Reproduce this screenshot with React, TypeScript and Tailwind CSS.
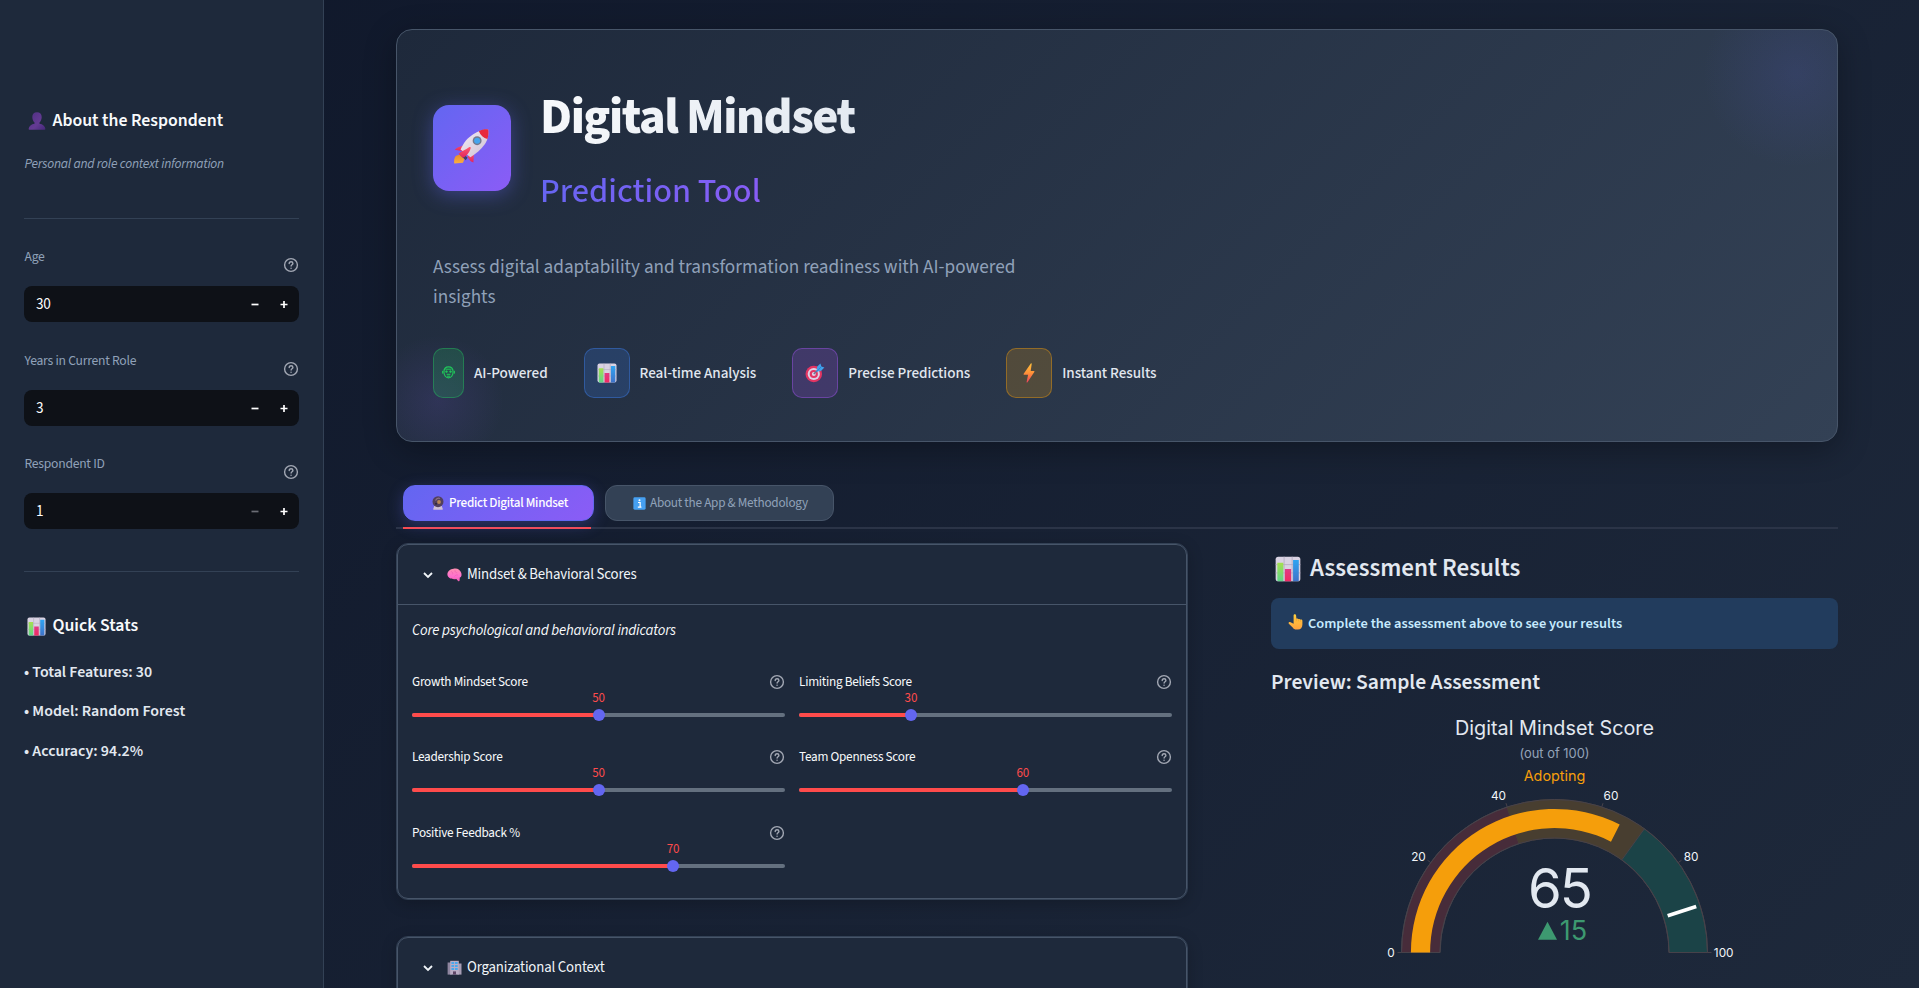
import React from "react";

type IconProps = { className?: string };

function ChartIcon({ className }: IconProps) {
  return (
    <svg viewBox="0 0 20 20" className={className}>
      <rect x="0.5" y="0.5" width="19" height="19" rx="2" fill="#d9d2e2" />
      <path d="M7 .5v19M13.2.5v19M.5 6.6h19M.5 13h19" stroke="#b3a9c0" strokeWidth=".6" />
      <path d="M1.8 5.2h4.600v14.300H2.400a1 1 0 0 1-.6-.6z" fill="url(#chGreen)" />
      <path d="M7.600 10h4.800v9.500H7.600z" fill="url(#chPink)" />
      <path d="M13.900 3h4.400v15.900a.8.8 0 0 1-.6.6h-3.800z" fill="url(#chBlue)" />
      <defs>
        <linearGradient id="chGreen" x1="0" y1="0" x2="0" y2="1"><stop stopColor="#a4e04e" /><stop offset="1" stopColor="#5fd48a" /></linearGradient>
        <linearGradient id="chPink" x1="0" y1="0" x2="0" y2="1"><stop stopColor="#e03a86" /><stop offset="1" stopColor="#f02a62" /></linearGradient>
        <linearGradient id="chBlue" x1="0" y1="0" x2="0" y2="1"><stop stopColor="#2fa4f2" /><stop offset="1" stopColor="#3f72c8" /></linearGradient>
      </defs>
    </svg>
  );
}

function UserIcon({ className }: IconProps) {
  return (
    <svg viewBox="0 0 18 18" className={className}>
      <defs><linearGradient id="usr" x1="0" y1="0" x2="1" y2="1"><stop stopColor="#4f2f83" /><stop offset=".6" stopColor="#643b93" /><stop offset="1" stopColor="#45287a" /></linearGradient></defs>
      <path d="M9 .3c3 0 4.700 1.900 4.700 4.700 0 2.200-.8 4.300-2.200 5.400v1.300c3.200.5 5.600 2.200 5.900 5.200 0 .5-.3.800-.8.800H1.400c-.5 0-.8-.3-.8-.8.3-3 2.700-4.700 5.900-5.200v-1.300C5.100 9.300 4.300 7.200 4.300 5 4.300 2.200 6 .3 9 .3z" fill="url(#usr)" />
    </svg>
  );
}

function RocketIcon({ className }: IconProps) {
  return (
    <svg viewBox="0 0 38 38" className={className}>
      <defs>
        <linearGradient id="rkBody" x1="0" y1="0" x2="1" y2="1"><stop stopColor="#f4edf5" /><stop offset="1" stopColor="#cdbfd2" /></linearGradient>
        <linearGradient id="rkFin" x1="0" y1="0" x2="0" y2="1"><stop stopColor="#ff5a6c" /><stop offset="1" stopColor="#e0245e" /></linearGradient>
        <linearGradient id="rkFire" x1="0" y1="0" x2="0" y2="1"><stop stopColor="#e88a2a" /><stop offset="1" stopColor="#fbb040" /></linearGradient>
      </defs>
      <path d="M9 19l6-2.500-3.500 7.500-8.700-1.600C4.200 20.600 6 19.600 9 19z" fill="url(#rkFin)" />
      <path d="M15.800 29l6.800-4.800-.6 11.300c-2.700-.7-4.800-3-6.200-6.500z" fill="url(#rkFin)" />
      <path d="M3.800 28.800l4-1.600 5 4.600-1.500 4-9 .7c-.5-3 .2-6 1.500-7.700z" fill="url(#rkFire)" />
      <path d="M7.500 26.700l6.500 6.400 2-2.600-6.400-6z" fill="#3b3f6b" />
      <path d="M37.200 1.500c.4 4.700.3 9.700-3.900 15.800-3.300 4.700-8 9-14.400 12.700L8.800 22C12 14.800 16 10 21.800 6.300 27 3 31.800 1.300 37.200 1.500z" fill="url(#rkBody)" />
      <path d="M27.600 3.300C31 1.400 34.600.9 37.200 1.500c.5 2.900.4 6.200-.8 9.700-4-1-7.300-3.700-8.800-7.900z" fill="#e8283c" />
      <circle cx="25.800" cy="13" r="4.600" fill="#74798c" />
      <circle cx="25.800" cy="13" r="3.100" fill="#45a5ee" />
      <path d="M17.500 19.800c1-.9 2.200-.2 1.600 1.300-1.300 4-4 8.200-8 9.500l-4.400-4.200c2.700-2.400 7.500-3.800 10.800-6.600z" fill="url(#rkFin)" />
    </svg>
  );
}

function TargetIcon({ className }: IconProps) {
  return (
    <svg viewBox="0 0 20 20" className={className}>
      <circle cx="8.800" cy="11" r="8.300" fill="#e23563" />
      <circle cx="8.800" cy="11" r="6.100" fill="#ddd0e6" />
      <circle cx="8.800" cy="11" r="4.100" fill="#e23563" />
      <circle cx="8.800" cy="11" r="2" fill="#ddd0e6" />
      <path d="M8.800 11l5-5" stroke="#6e7590" strokeWidth="1.500" />
      <path d="M11.500 8.800l.6-5 3.300-3.300 1 3 3 1-3.200 3.300z" fill="#3fa2ec" />
      <path d="M11.500 8.800l4.900-5.300" stroke="#2676c9" strokeWidth=".7" />
    </svg>
  );
}

function BoltIcon({ className }: IconProps) {
  return (
    <svg viewBox="0 0 20 20" className={className}>
      <defs><linearGradient id="blt" x1="0" y1="0" x2="0" y2="1"><stop stopColor="#ffc13c" /><stop offset=".5" stopColor="#ff9238" /><stop offset="1" stopColor="#ef3f5c" /></linearGradient></defs>
      <path d="M11.800.5c.5-.5 1-.1.9.5l-1 7h3.100c.6 0 .8.500.5 1L8.500 19.300c-.4.600-1.100.3-.9-.4l1.500-7.200H5.200c-.5 0-.8-.5-.5-1z" fill="url(#blt)" />
    </svg>
  );
}

function RobotIcon({ className }: IconProps) {
  return (
    <svg viewBox="0 0 13 13" className={className} fill="none" stroke="#20c75a">
      <path d="M6.500.9c2.900 0 4.600 2 4.600 5s-1.700 6-4.600 6-4.600-3-4.600-6 1.700-5 4.600-5z" strokeWidth="1.200" />
      <path d="M.6 4.800v2.800M12.400 4.800v2.800M3.500 3.200h6M4.600 8.300h3.800M5 10.200h3" strokeWidth="1" />
      <circle cx="4.500" cy="5.600" r=".9" fill="#20c75a" strokeWidth=".7" />
      <circle cx="8.500" cy="5.600" r=".9" fill="#20c75a" strokeWidth=".7" />
    </svg>
  );
}

function CrystalIcon({ className }: IconProps) {
  return (
    <svg viewBox="0 0 14 14" className={className}>
      <path d="M3.300 10h7.400l1.100 3.100c.1.400-.1.700-.5.700H2.700c-.4 0-.6-.3-.5-.7z" fill="#cfbfd6" />
      <circle cx="7" cy="5.700" r="5.500" fill="#52405e" />
      <path d="M4.500 4.500c1-2 3-2.700 4.500-2" stroke="#8d6f86" strokeWidth="1.200" fill="none" />
      <circle cx="8" cy="6" r="1.900" fill="#b98552" />
      <circle cx="5" cy="7.800" r="1" fill="#2d2340" />
    </svg>
  );
}

function InfoIcon({ className }: IconProps) {
  return (
    <svg viewBox="0 0 14 14" className={className}>
      <rect x=".4" y=".4" width="13.200" height="13.200" rx="1.500" fill="#46a0f2" />
      <circle cx="7" cy="3.400" r="1.100" fill="#fff" />
      <path d="M5.400 5.900h2.300v5M5.200 11h3.900" stroke="#fff" strokeWidth="1.300" fill="none" />
    </svg>
  );
}

function BrainIcon({ className }: IconProps) {
  return (
    <svg viewBox="0 0 15 14" className={className}>
      <defs><linearGradient id="brn" x1="0" y1="0" x2="0" y2="1"><stop stopColor="#ff8fb0" /><stop offset=".6" stopColor="#ff70cf" /><stop offset="1" stopColor="#ee5cae" /></linearGradient></defs>
      <path d="M6.500.7C9.800-.3 13.400 1.500 14.300 5c.6 2.300.1 4-1.500 4.600l-.2 3c0 .8-1 .9-1.500.4L9.300 11C5 11.700.6 10.300.4 6.500.3 3.300 3.400 1 6.500.7z" fill="url(#brn)" />
      <path d="M4 3.500c1.500.4 2 1.500 1.500 2.800M8 2.200c-.3 1.600.7 2.500 2.200 2.600M7.500 8.500c.8-1.400 2-1.800 3.500-1.400" stroke="#e657ae" strokeWidth=".5" fill="none" />
    </svg>
  );
}

function BuildingIcon({ className }: IconProps) {
  return (
    <svg viewBox="0 0 15 15" className={className}>
      <path d="M.6 2.500h4v12.100h-4z" fill="#8f86a0" />
      <path d="M10.500 3.500h4v11.100h-4z" fill="#a79db5" />
      <path d="M3.200.8h8.600v13.800H3.200z" fill="#b9adc6" />
      <path d="M4.400 2h2.700v2H4.400zM8 2h2.700v2H8zM4.400 5h2.700v2H4.400zM8 5h2.700v2H8zM4.400 8h2.700v2H4.400zM8 8h2.700v2H8z" fill="#4aa7ec" />
      <path d="M6 11.400h3v3.200H6z" fill="#5d4668" />
    </svg>
  );
}

function HandIcon({ className }: IconProps) {
  return (
    <svg viewBox="0 0 15 16" className={className}>
      <defs><linearGradient id="hnd" x1="0" y1="0" x2="0" y2="1"><stop stopColor="#ffcf3d" /><stop offset="1" stopColor="#ffa23e" /></linearGradient></defs>
      <path d="M5.600 1.500c0-1.500 2.300-1.600 2.500 0l.3 3.300c.5-.5 1.700-.4 2 .3.700-.4 1.700-.2 2 .6.9-.4 2 .2 2 1.200v3.600c0 3-1.700 5.100-4.500 5.100H8.500c-1.800 0-3-.8-3.800-2.200L.8 9.800C0 8.500 1.400 7.500 2.500 8.200l3.100 1.500z" fill="url(#hnd)" />
      <path d="M8.400 4.800v2.400M10.400 5.200v2.200M12.400 5.900v1.900" stroke="#e8902e" strokeWidth=".5" />
    </svg>
  );
}

function HelpIcon({ className }: IconProps) {
  return (
    <svg viewBox="0 0 16 16" className={className} fill="none" stroke="#a3a8b4" strokeWidth="1.400" strokeLinecap="round">
      <circle cx="8" cy="8" r="6.400" />
      <path d="M6.200 6.600c0-1 .8-1.800 1.900-1.800s1.800.7 1.800 1.600c0 1.300-1.800 1.400-1.800 2.700" />
      <path d="M8.050 11.200v.1" strokeWidth="1.500" />
    </svg>
  );
}

function NumberField({ label, value, minusOff, className }: { label: string; value: string; minusOff?: boolean; className: string }) {
  return (
    <div className={className}>
      <div className="flex h-[38px] justify-between">
        <span className="-mt-px ml-[0.5px] text-[13.600px] leading-[20px] tracking-[-0.250px] text-slate-400">{label}</span>
        <HelpIcon className="mt-[8.500px] h-4 w-4" />
      </div>
      <div className="flex h-9 items-center rounded-lg bg-[#0e1117] pl-3 pr-[11.500px]">
        <span className="flex-1 text-[15.200px] leading-[20px] tracking-[-0.200px] text-white">{value}</span>
        <svg viewBox="0 0 8 8" className={minusOff ? "h-2 w-2 text-[#6b6d75]" : "h-2 w-2 text-white"}><path d="M.5 4.500h7" stroke="currentColor" strokeWidth="1.700" /></svg>
        <svg viewBox="0 0 8 8" className="ml-[21px] h-2 w-2 text-white"><path d="M.5 4.500h7M4 1v7" stroke="currentColor" strokeWidth="1.700" /></svg>
      </div>
    </div>
  );
}

function Slider({ label, value }: { label: string; value: number }) {
  return (
    <div className="h-[75.600px]">
      <div className="flex h-5 items-center justify-between">
        <span className="text-[13.200px] leading-5 tracking-[-0.250px] text-slate-50">{label}</span>
        <HelpIcon className="h-4 w-4" />
      </div>
      <div className="relative h-[21px]">
        <span className="absolute -top-[4px] -translate-x-1/2 text-[13px] leading-5 tracking-[-0.100px] text-[#ff4b4b]" style={{ left: `${value}%` }}>{value}</span>
      </div>
      <div className="relative h-1 rounded bg-[#64707f]">
        <div className="h-1 rounded bg-[#ff4b4b]" style={{ width: `${value}%` }} />
        <div className="absolute -top-[4px] h-3 w-3 -translate-x-1/2 rounded-full bg-[#6366f1]" style={{ left: `${value}%` }} />
      </div>
    </div>
  );
}

function CardHeader({ icon, title }: { icon: React.ReactNode; title: string }) {
  return (
    <div className="flex h-[59px] items-center pl-[24px]">
      <svg viewBox="0 0 12 12" className="h-3 w-3"><path d="M2 4l4 4 4-4" fill="none" stroke="#f1f5f9" strokeWidth="1.800" /></svg>
      <span className="ml-[13px]">{icon}</span>
      <span className="ml-[5px] text-[14.800px] leading-5 tracking-[-0.170px] text-slate-100">{title}</span>
    </div>
  );
}

function Feature({ box, icon, label }: { box: string; icon: React.ReactNode; label: string }) {
  return (
    <div className="flex items-center gap-[10px]">
      <div className={"flex h-[50px] items-center justify-center rounded-[10px] border " + box}>{icon}</div>
      <span className="text-[15.200px] font-medium leading-6 tracking-[-0.040px] text-slate-200">{label}</span>
    </div>
  );
}

const CX = 203.500;
const CY = 253.500;
const at = (v: number, r: number) => {
  const a = Math.PI * (1 - v / 100);
  return [CX + r * Math.cos(a), CY - r * Math.sin(a)];
};
const band = (from: number, to: number, ro: number, ri: number) => {
  const [a, b] = at(from, ro);
  const [c, d] = at(to, ro);
  const [e, f] = at(to, ri);
  const [g, h] = at(from, ri);
  return `M${a} ${b}A${ro} ${ro} 0 0 1 ${c} ${d}L${e} ${f}A${ri} ${ri} 0 0 0 ${g} ${h}Z`;
};
const tick = (v: number) => {
  const [a, b] = at(v, 153);
  const [c, d] = at(v, 157);
  return `M${a} ${b}L${c} ${d}`;
};

function Gauge() {
  const [mx, my] = at(90, 119);
  const [nx, ny] = at(90, 149);
  return (
    <svg viewBox="0 0 407 288" className="ml-[80px] block h-[288px] w-[407px] font-['Inter',sans-serif]" textAnchor="middle">
      <text x="203.500" y="36" fontSize="19.800" fill="#e2e8f0">Digital Mindset Score</text>
      <text x="203.500" y="58.500" fontSize="12.900" fill="#94a3b8">(out of 100)</text>
      <text x="203.500" y="82" fontSize="14.400" fill="#f59e0b">Adopting</text>
      <g stroke="#47424a" strokeWidth="1">
        <path d={band(0, 40, 153, 114.500)} fill="#472c3a" />
        <path d={band(40, 70, 153, 114.500)} fill="#483e30" stroke="#483e30" />
        <path d={band(70, 100, 153, 114.500)} fill="#1b4347" />
        <path d={band(0, 100, 153, 114.500)} fill="none" />
        <path d={[0, 20, 40, 60, 80, 100].map(tick).join("")} />
      </g>
      <path d={band(0, 65, 143.600, 124.400)} fill="#f59e0b" />
      <path d={`M${mx} ${my}L${nx} ${ny}`} stroke="#fff" strokeWidth="3.800" />
      <g fontSize="11.800" fill="#f1f5f9">
        <text x="40" y="258">0</text>
        <text x="67.500" y="162">20</text>
        <text x="147.500" y="101">40</text>
        <text x="260" y="101">60</text>
        <text x="340" y="162">80</text>
        <text x="372.700" y="258">100</text>
      </g>
      <text x="209.500" y="208.500" fontSize="54.500" textLength="65" fill="#e2e8f0">65</text>
      <path d="M187 240.700l9.500-18 9.500 18z" fill="#3d9970" />
      <text x="222.500" y="241" fontSize="27" fill="#3d9970">15</text>
    </svg>
  );
}

export default function App() {
  return (
    <div className="flex h-[988px] w-full overflow-hidden bg-[linear-gradient(135deg,#0f172a_0%,#1e293b_100%)] font-['Source_Sans_3','Source_Sans_Pro','Noto_Sans_CJK_SC',sans-serif] text-slate-200">
      <aside className="flex w-[324px] shrink-0 flex-col border-r border-[#334155] bg-[#1e293b] pl-6 pr-6 pt-[109px]">
        <h2 className="flex h-6 items-center text-[17.800px] font-semibold text-slate-50">
          <UserIcon className="ml-1 mr-[6.500px] h-[18px] w-[18px]" /><span className="pt-px">About the Respondent</span>
        </h2>
        <p className="ml-[0.5px] mt-[21px] text-[13.500px] italic leading-5 tracking-[-0.220px] text-slate-400">Personal and role context information</p>
        <hr className="mt-[44px] border-[#334155]" />
        <NumberField className="mt-[29px]" label="Age" value="30" />
        <NumberField className="mt-[30px]" label="Years in Current Role" value="3" />
        <NumberField className="mt-[29px]" label="Respondent ID" value="1" minusOff />
        <hr className="mt-[42px] border-[#334155]" />
        <h2 className="mt-[42px] flex h-6 items-center text-[17.800px] font-semibold text-slate-50">
          <ChartIcon className="ml-[3px] mr-[6.500px] h-[19px] w-[19px]" />Quick Stats
        </h2>
        <p className="mt-[22px] text-[15.900px] font-semibold leading-6">• Total Features: 30</p>
        <p className="mt-[15px] text-[15.900px] font-semibold leading-6">• Model: Random Forest</p>
        <p className="mt-[16px] text-[15.900px] font-semibold leading-6">• Accuracy: 94.2%</p>
      </aside>

      <main className="flex-1 pl-[72px] pr-[81px] pt-[29px]">
        <section className="relative h-[413px] overflow-hidden rounded-[16px] border border-[#475569] bg-[linear-gradient(135deg,#1e293b_0%,#334155_100%)] pl-[36px] shadow-[0_8px_32px_rgba(0,0,0,0.3)]">
          <div className="absolute -top-[56px] right-[-59px] h-[200px] w-[200px] bg-[radial-gradient(circle,rgba(99,102,241,0.12)_0%,transparent_66%)]" />
          <div className="absolute bottom-[-35px] left-[-34px] h-[150px] w-[150px] bg-[radial-gradient(circle,rgba(139,92,246,0.12)_0%,transparent_62%)]" />
          <div className="relative">
            <div className="flex pt-[75px]">
              <div className="flex h-[86px] w-[78px] items-center justify-center rounded-[16px] bg-[linear-gradient(135deg,#6366f1_0%,#8b5cf6_100%)] shadow-[0_4px_20px_rgba(99,102,241,0.4)]">
                <RocketIcon className="-mt-[3px] mr-[3px] h-[37px] w-[37px]" />
              </div>
              <div className="-mt-[21px] ml-[30px]">
                <h1 className="-ml-px h-[66px] w-fit bg-[linear-gradient(135deg,#f8fafc_0%,#e2e8f0_100%)] bg-clip-text text-[50.400px] font-extrabold leading-[66px] tracking-[-1.500px] text-transparent">Digital Mindset</h1>
                <div className="-ml-px mt-[19px] w-fit bg-[linear-gradient(135deg,#6366f1_0%,#8b5cf6_100%)] bg-clip-text text-[34.400px] font-medium leading-[46px] text-transparent">Prediction Tool</div>
              </div>
            </div>
            <p className="mt-[37px] w-[600px] text-[19.200px] leading-[30px] text-slate-400">Assess digital adaptability and transformation readiness with AI-powered insights</p>
            <div className="mt-[36px] flex gap-[36px]">
              <Feature box="w-[31px] border-[#22c55e]/40 bg-[#22c55e]/20" icon={<RobotIcon className="-mt-[2px] h-[13px] w-[13px] shrink-0" />} label="AI-Powered" />
              <Feature box="w-[46px] border-[#3b82f6]/40 bg-[#3b82f6]/20" icon={<ChartIcon className="h-5 w-5" />} label="Real-time Analysis" />
              <Feature box="w-[46px] border-[#a855f7]/40 bg-[#a855f7]/20" icon={<TargetIcon className="h-5 w-5" />} label="Precise Predictions" />
              <Feature box="w-[46px] border-[#f59e0b]/40 bg-[#f59e0b]/20" icon={<BoltIcon className="h-5 w-5" />} label="Instant Results" />
            </div>
          </div>
        </section>

        <nav className="mt-[43px] flex h-9 gap-[11px] pl-[7px]">
          <div className="flex w-[191px] items-center rounded-[12px] border border-[#6366f1] bg-[linear-gradient(135deg,#6366f1_0%,#8b5cf6_100%)] pl-[27px] text-[13.200px] font-medium tracking-[-0.300px] text-white shadow-[0_4px_16px_rgba(99,102,241,0.3)]">
            <CrystalIcon className="mr-[4px] h-[14px] w-[14px]" />Predict Digital Mindset
          </div>
          <div className="flex w-[229px] items-center rounded-[12px] border border-[#475569] bg-[#334155] pl-[27px] text-[13.200px] tracking-[-0.250px] text-slate-400">
            <InfoIcon className="mr-[4px] h-[13px] w-[13px]" />About the App &amp; Methodology
          </div>
        </nav>
        <div className="mt-[6px] h-[2px] bg-[#2b3447] pl-[7px]"><div className="h-[2px] w-[188px] bg-[#ff4b4b]" /></div>

        <div className="mt-[14px] flex">
          <div className="w-[792px] shrink-0">
            <section className="h-[357px] rounded-[12px] border border-[#334155] shadow-[0_4px_16px_rgba(0,0,0,0.2)]">
              <div className="h-full rounded-[11px] border border-[#475569] bg-[#1e293b]">
                <CardHeader icon={<BrainIcon className="h-[14px] w-[15px]" />} title="Mindset & Behavioral Scores" />
                <div className="border-t border-[#475569] px-[14px] pt-[15px]">
                  <p className="text-[14.800px] italic leading-[22px] tracking-[-0.160px] text-slate-50">Core psychological and behavioral indicators</p>
                  <div className="mt-[29.500px] grid grid-cols-2 gap-x-[14px]">
                    <Slider label="Growth Mindset Score" value={50} />
                    <Slider label="Limiting Beliefs Score" value={30} />
                    <Slider label="Leadership Score" value={50} />
                    <Slider label="Team Openness Score" value={60} />
                    <Slider label="Positive Feedback %" value={70} />
                  </div>
                </div>
              </div>
            </section>
            <section className="mt-[36px] h-[200px] rounded-[12px] border border-[#334155] shadow-[0_4px_16px_rgba(0,0,0,0.2)]">
              <div className="h-full rounded-[11px] border border-[#475569] bg-[#1e293b]">
                <CardHeader icon={<BuildingIcon className="h-[15px] w-[15px]" />} title="Organizational Context" />
              </div>
            </section>
          </div>

          <div className="ml-[83px] flex-1">
            <h2 className="mt-[9px] flex h-8 items-center pt-px text-[25px] font-semibold text-slate-200">
              <ChartIcon className="ml-[4px] mr-[9px] h-[26px] w-[26px]" />Assessment Results
            </h2>
            <div className="mt-[14px] flex h-[51px] items-center rounded-lg bg-[#223c5d] pl-[17px] text-[14.400px] font-semibold text-[#c7ebff]">
              <HandIcon className="mr-[5px] -mt-1 h-4 w-[15px]" />Complete the assessment above to see your results
            </div>
            <h3 className="mb-px mt-[19px] h-[30px] text-[21.600px] font-semibold leading-[30px] text-slate-200">Preview: Sample Assessment</h3>
            <Gauge />
          </div>
        </div>
      </main>
    </div>
  );
}
